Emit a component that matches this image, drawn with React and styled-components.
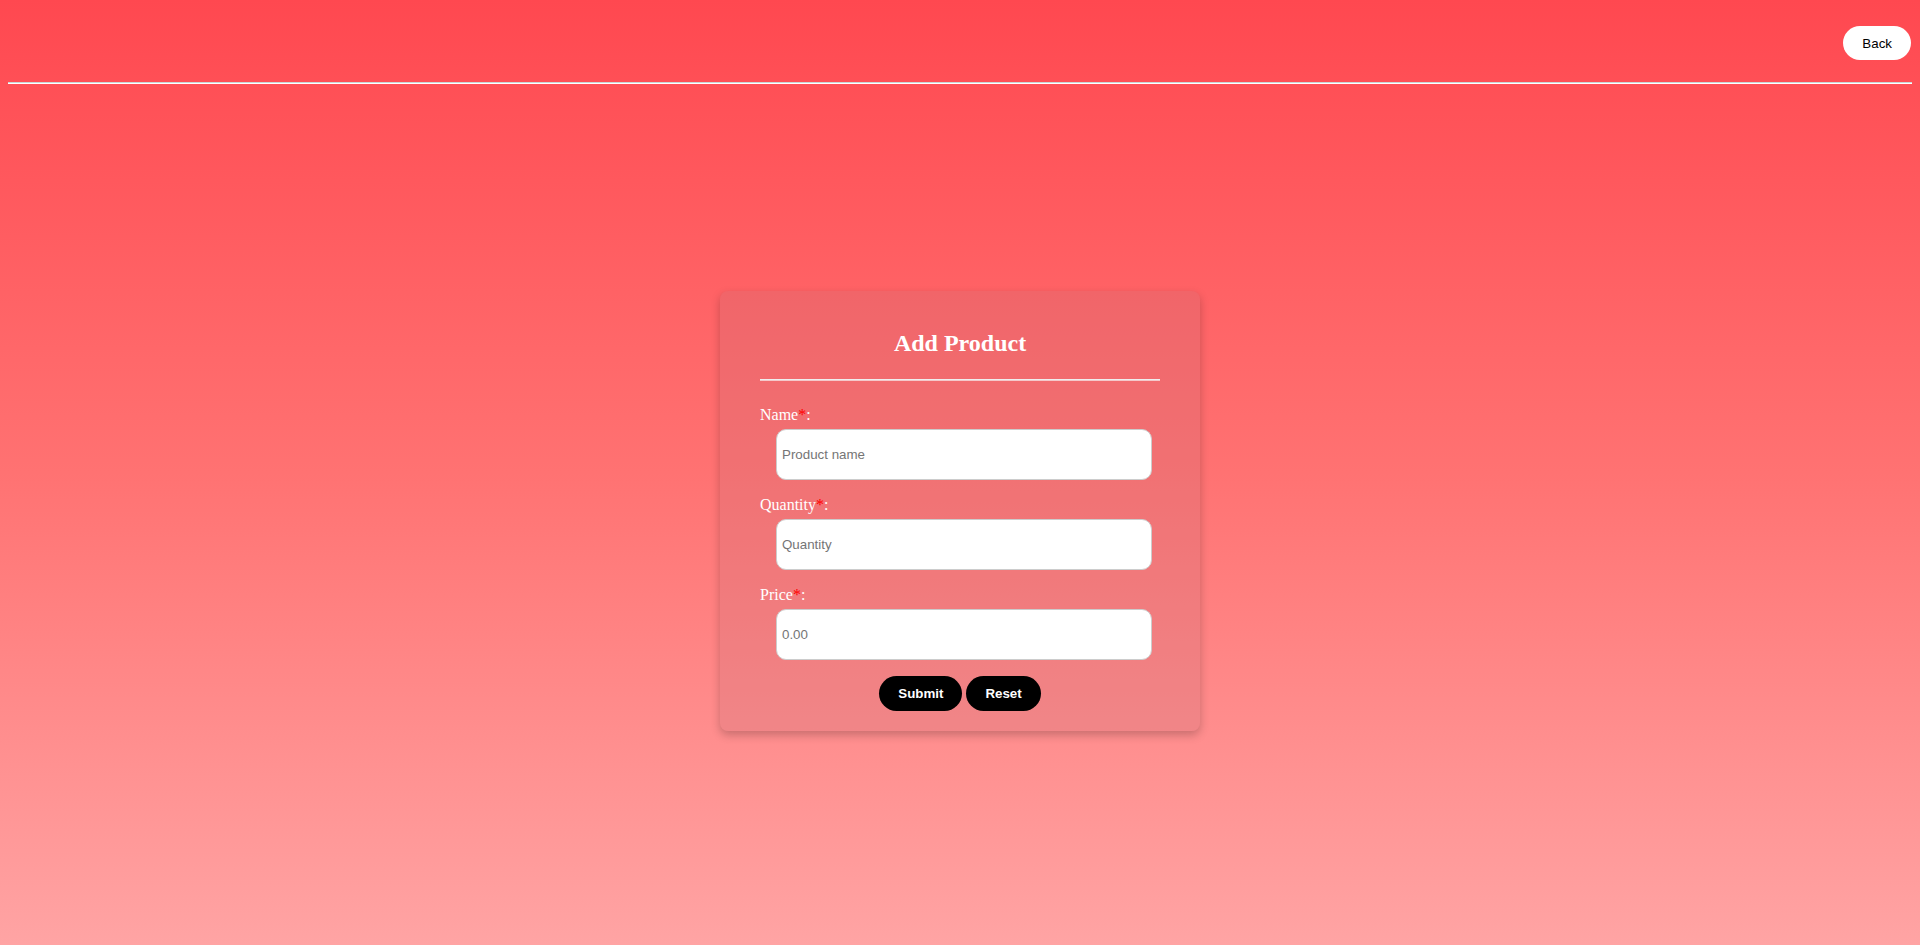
import React from "react";
import styled, { createGlobalStyle } from "styled-components";

const GlobalStyle = createGlobalStyle`
  html, body {
    margin: 0;
    padding: 0;
  }
  body {
    font-family: "Liberation Serif", "Times New Roman", serif;
    background: linear-gradient(to bottom, #ff4850 0%, #ff7272 50%, #ffa4a4 100%);
    min-height: 100vh;
  }
`;

const Page = styled.div`
  min-height: 100vh;
  box-sizing: border-box;
  padding: 0 8px;
  display: flex;
  flex-direction: column;
`;

const Header = styled.header`
  display: flex;
  justify-content: flex-end;
  padding: 26px 1px 22px 0;
`;

const Divider = styled.hr`
  margin: 0;
  height: 0;
  border: none;
  border-top: 1px solid ${(p) => p.$top || "#c9d6d6"};
  border-bottom: 1px solid ${(p) => p.$bottom || "#ffffff"};
`;

const PillButton = styled.button`
  height: ${(p) => (p.$small ? "34px" : "35px")};
  padding: 0 19px;
  border: none;
  border-radius: 18px;
  background: ${(p) => (p.$light ? "#ffffff" : "#000000")};
  color: ${(p) => (p.$light ? "#000000" : "#ffffff")};
  font-family: "Liberation Sans", Arial, sans-serif;
  font-size: 13.33px;
  font-weight: ${(p) => (p.$light ? 400 : 700)};
  cursor: pointer;
`;

const Main = styled.main`
  flex: 1;
  display: flex;
  align-items: center;
  justify-content: center;
  padding-bottom: 8px;
`;

const Card = styled.form`
  width: 480px;
  box-sizing: border-box;
  padding: 38px 40px 20px;
  border-radius: 8px;
  background: rgba(200, 110, 120, 0.25);
  box-shadow: 0 4px 10px rgba(0, 0, 0, 0.22);
`;

const Title = styled.h2`
  margin: 0 0 22px;
  text-align: center;
  color: #ffffff;
  font-size: 24px;
  line-height: 28px;
  font-weight: 700;
`;

const Field = styled.div`
  margin-top: ${(p) => (p.$first ? "25px" : "16px")};
`;

const Label = styled.label`
  display: block;
  color: #ffffff;
  font-size: 16px;
  line-height: 18px;
`;

const Required = styled.span`
  color: #ff0000;
`;

const Input = styled.input`
  display: block;
  box-sizing: border-box;
  width: 376px;
  height: 51px;
  margin: 5px 0 0 16px;
  padding: 0 5px;
  border: 1px solid #cccccc;
  border-radius: 10px;
  background: #ffffff;
  font-family: "Liberation Sans", Arial, sans-serif;
  font-size: 13.33px;
  outline: none;

  &::placeholder {
    color: #757575;
  }
`;

const Actions = styled.div`
  display: flex;
  justify-content: center;
  gap: 4px;
  margin-top: 16px;
`;

const fields = [
  { name: "Name", placeholder: "Product name", type: "text" },
  { name: "Quantity", placeholder: "Quantity", type: "number" },
  { name: "Price", placeholder: "0.00", type: "number" },
];

const App = () => {
  return (
    <>
      <GlobalStyle />
      <Page>
        <Header>
          <PillButton $light $small type="button">
            Back
          </PillButton>
        </Header>
        <Divider />
        <Main>
          <Card onSubmit={(e) => e.preventDefault()}>
            <Title>Add Product</Title>
            <Divider $top="#eeeeee" $bottom="#f4c8ca" />
            {fields.map((f, i) => (
              <Field key={f.name} $first={i === 0}>
                <Label htmlFor={f.name}>
                  {f.name}
                  <Required>*</Required>:
                </Label>
                <Input id={f.name} type={f.type} placeholder={f.placeholder} />
              </Field>
            ))}
            <Actions>
              <PillButton type="submit">Submit</PillButton>
              <PillButton type="reset">Reset</PillButton>
            </Actions>
          </Card>
        </Main>
      </Page>
    </>
  );
};

export default App;
